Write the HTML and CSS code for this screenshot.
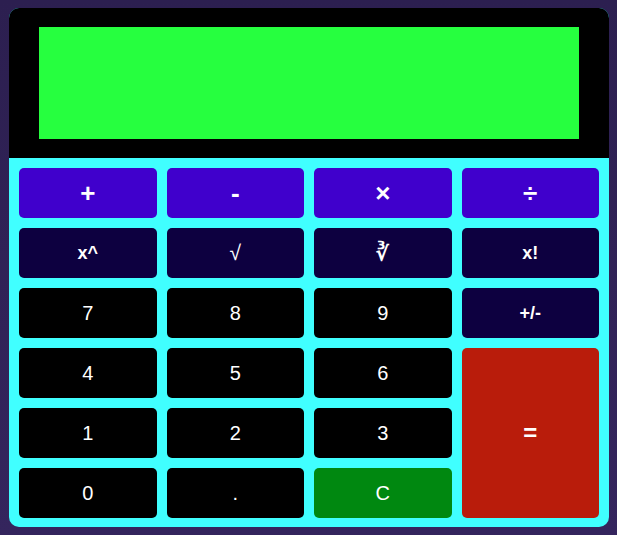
FILE: index.html
```html
<!DOCTYPE html>
<html>
<head>
<meta charset="utf-8">
<link rel="stylesheet" href="styles.css">
</head>
<body>
<div class="calc">
  <div class="head"><div class="display"></div></div>
  <div class="keys">
    <button class="k op">+</button>
    <button class="k op">-</button>
    <button class="k op">×</button>
    <button class="k op">÷</button>
    <button class="k fn">x^</button>
    <button class="k fn sq">√</button>
    <button class="k fn rt">∛</button>
    <button class="k fn">x!</button>
    <button class="k">7</button>
    <button class="k">8</button>
    <button class="k">9</button>
    <button class="k fn">+/-</button>
    <button class="k">4</button>
    <button class="k">5</button>
    <button class="k">6</button>
    <button class="k eq">=</button>
    <button class="k">1</button>
    <button class="k">2</button>
    <button class="k">3</button>
    <button class="k">0</button>
    <button class="k">.</button>
    <button class="k clr">C</button>
  </div>
</div>
</body>
</html>
```
FILE: styles.css
```css
html, body { margin: 0; padding: 0; }
body {
  width: 617px;
  height: 535px;
  background: linear-gradient(180deg, #2c1f50 0%, #34255d 100%);
  font-family: "Liberation Sans", Arial, sans-serif;
  padding: 8px 0 0 9px;
  box-sizing: border-box;
}
.calc {
  width: 600px;
  border-radius: 10px;
  overflow: hidden;
  background: #40ffff;
  display: flex;
  flex-direction: column;
}
.head {
  background: #000;
  height: 150px;
  padding: 19px 30px;
  box-sizing: border-box;
}
.display {
  background: #26ff3f;
  height: 112px;
}
.keys {
  padding: 10px 10px 9px;
  display: grid;
  grid-template-columns: repeat(4, 1fr);
  grid-template-rows: repeat(6, 50px);
  gap: 10px;
}
.k {
  border: none;
  border-radius: 5px;
  background: #000;
  color: #fff;
  font-family: "Liberation Sans", Arial, sans-serif;
  font-size: 20px;
  padding: 0;
}
.op { background: #4000cc; font-size: 26px; font-weight: bold; }
.fn { background: #0d0040; font-size: 18px; font-weight: bold; }
.rt { font-size: 20px; }
.sq { font-size: 21px; font-weight: normal; }
.eq { background: #b91c0b; grid-row: span 3; font-size: 24px; font-weight: bold; }
.clr { background: #008810; }
```
